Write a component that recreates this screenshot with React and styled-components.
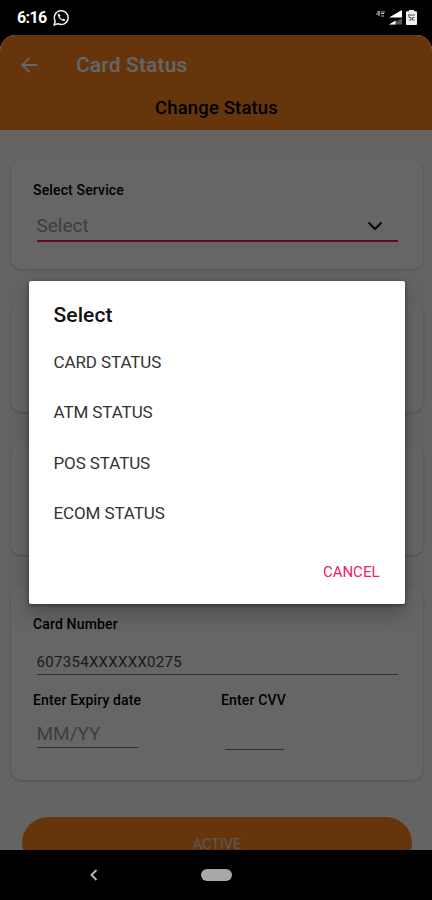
import React from "react";
import styled, { createGlobalStyle } from "styled-components";

const GlobalStyle = createGlobalStyle`
  * { box-sizing: border-box; }
  body {
    margin: 0;
    background: #000;
    font-family: Roboto, "Liberation Sans", sans-serif;
  }
`;

const Phone = styled.div`
  width: 432px;
  height: 900px;
  display: flex;
  flex-direction: column;
  overflow: hidden;
  background: #000;
`;

const StatusBar = styled.div`
  height: 35px;
  flex: none;
  display: flex;
  justify-content: space-between;
  align-items: center;
  padding: 0 15px 0 17px;
`;

const StatusGroup = styled.div`
  display: flex;
  align-items: center;
  gap: ${p => p.gap}px;
`;

const Clock = styled.span`
  color: #fff;
  font-size: 16px;
  font-weight: 700;
  line-height: 20px;
  letter-spacing: -0.6px;
  padding-top: 1px;
`;

const Screen = styled.div`
  position: relative;
  height: 815px;
  flex: none;
  overflow: hidden;
  border-radius: 16px 16px 0 0;
  background: #fafafa;
`;

const Header = styled.header`
  height: 95px;
  background: #ff851e;
`;

const Toolbar = styled.div`
  height: 58px;
  display: flex;
  align-items: center;
  gap: 37px;
  padding: 2px 0 0 20px;
`;

const Title = styled.h1`
  margin: 0;
  color: #fff;
  font-size: 21px;
  font-weight: 500;
  letter-spacing: 0.15px;
  line-height: 24px;
`;

const Subtitle = styled.h2`
  margin: 4px 0 0 1px;
  color: #000;
  font-size: 18.5px;
  font-weight: 500;
  line-height: 22px;
  letter-spacing: 0.15px;
  text-align: center;
`;

const Content = styled.main`
  display: flex;
  flex-direction: column;
  gap: 33px;
  padding: 30px 9px 0 11px;
`;

const Card = styled.section`
  height: ${p => p.height}px;
  flex: none;
  padding: ${p => p.top || 20}px 25px 0 22px;
  border-radius: 10px;
  background: #fff;
  box-shadow: 0 1px 3px rgba(0, 0, 0, 0.22);
`;

const Label = styled.div`
  color: #000;
  font-size: 14px;
  font-weight: 500;
  line-height: 20px;
  letter-spacing: 0.15px;
`;

const Field = styled.div`
  display: flex;
  align-items: center;
  justify-content: space-between;
  width: ${p => p.width}px;
  height: ${p => p.height}px;
  margin: ${p => p.top}px 0 0 3.5px;
  padding: 2px 15px 0 0;
  border-bottom: ${p => (p.active ? "2px solid #ff1468" : "1px solid #777")};
  color: ${p => (p.filled ? "#444" : "#9c9c9c")};
  font-size: ${p => (p.filled ? 15 : 19)}px;
  letter-spacing: ${p => (p.filled ? 0.3 : 0)}px;
`;

const Columns = styled.div`
  display: grid;
  grid-template-columns: 188px 1fr;
  margin-top: 15px;
`;

const ActiveButton = styled.button`
  height: 52px;
  flex: none;
  margin: 4px 11px 0;
  padding: 3px 0 0;
  border: 0;
  border-radius: 26px;
  background: #ff851e;
  color: #ddd;
  font-family: inherit;
  font-size: 14.5px;
  line-height: 12px;
`;

const Scrim = styled.div`
  position: absolute;
  inset: 0;
  display: flex;
  justify-content: center;
  align-items: flex-start;
  padding: 245.5px 0 0 1px;
  background: rgba(0, 0, 0, 0.6);
`;

const Dialog = styled.div`
  width: 376px;
  height: 323px;
  display: flex;
  flex-direction: column;
  padding: 21px 25px 21px;
  border-radius: 2px;
  background: #fff;
  box-shadow: 0 10px 20px rgba(0, 0, 0, 0.25), 0 1px 4px rgba(0, 0, 0, 0.4);
`;

const DialogTitle = styled.h3`
  margin: 0;
  color: #111;
  font-size: 21px;
  font-weight: 500;
  line-height: 26px;
  letter-spacing: 0.1px;
`;

const Option = styled.div`
  height: 50.4px;
  color: #333;
  font-size: 17px;
  line-height: 50.4px;
  letter-spacing: -0.1px;
`;

const OptionList = styled.div`
  margin-top: 9.4px;
`;

const Cancel = styled.button`
  align-self: flex-end;
  margin-top: auto;
  padding: 0;
  border: 0;
  background: none;
  color: #f02069;
  font-family: inherit;
  font-size: 15px;
  line-height: 22px;
`;

const NavBar = styled.nav`
  height: 50px;
  flex: none;
  display: flex;
  align-items: center;
  padding-left: 89px;
  gap: 103px;
`;

const HomePill = styled.div`
  width: 31px;
  height: 12px;
  border-radius: 6px;
  background: #a8a8a8;
`;

const WhatsappIcon = () => (
  <svg width="17" height="17" viewBox="0 0 17 17" fill="none">
    <path d="M1.2 15.8l1-3.8a6.9 6.9 0 1 1 2.7 2.7z" stroke="#eee" strokeWidth="1.5" />
    <path d="M5.7 4.4c-1 .5-1.2 1.6-.7 2.7 1 2.4 2.6 4 4.9 4.8 1.2.4 2.2-.1 2.5-1.2l-2-1.2-1 .9C8 9.6 7.2 8.7 6.7 7.5l.8-1z" fill="#eee" />
  </svg>
);

const SignalIcon = () => (
  <svg width="13" height="15" viewBox="0 0 13 15">
    <path d="M0 7.5L13 0v7.5z" fill="#fff" />
    <path d="M0 14.5L13 8.5v6z" fill="#555" />
    <path d="M0 14.500L6.500 10.500v4z" fill="#fff" />
  </svg>
);

const NetworkIcon = () => (
  <svg width="9" height="15" viewBox="0 0 9 15" fill="none" stroke="#bbb">
    <path d="M3 1v5M0 4h4M1 2h3M5 2h4M5 3.500h3M5 6h3" />
  </svg>
);

const BatteryIcon = () => (
  <svg width="11" height="15" viewBox="0 0 11 15">
    <path d="M3 0h5v1.300h2q1 0 1 1V14q0 1-1 1H1q-1 0-1-1V2.300q0-1 1-1h2z" fill="#eee" />
    <path d="M2 5h7M3 5v2.500h2V10H3M8.500 7.500H6.500V10h2" stroke="#555" fill="none" />
  </svg>
);

const BackIcon = () => (
  <svg width="19" height="18" viewBox="0 0 19 18" fill="none" stroke="#fff" strokeWidth="1.9">
    <path d="M9.500 1.800L2.300 9l7.200 7.200M2.300 9h15.200" />
  </svg>
);

const ChevronDown = () => (
  <svg width="16" height="10" viewBox="0 0 16 10" fill="none" stroke="#111" strokeWidth="2">
    <path d="M1.500 1.500L8 8l6.500-6.500" />
  </svg>
);

const NavBack = () => (
  <svg width="9" height="12" viewBox="0 0 9 12" fill="none" stroke="#b5b5b5" strokeWidth="2">
    <path d="M7.500 1L2.500 6l5 5" />
  </svg>
);

const options = ["CARD STATUS", "ATM STATUS", "POS STATUS", "ECOM STATUS"];

const App = () => {
    return (
        <Phone>
            <GlobalStyle />
            <StatusBar>
                <StatusGroup gap={6}>
                    <Clock>6:16</Clock>
                    <WhatsappIcon />
                </StatusGroup>
                <StatusGroup gap={4}>
                    <NetworkIcon />
                    <SignalIcon />
                    <BatteryIcon />
                </StatusGroup>
            </StatusBar>

            <Screen>
                <Header>
                    <Toolbar>
                        <BackIcon />
                        <Title>Card Status</Title>
                    </Toolbar>
                    <Subtitle>Change Status</Subtitle>
                </Header>
                <Content>
                    <Card height={109}>
                        <Label>Select Service</Label>
                        <Field active width={361} height={32} top={9.5}>
                            <span>Select</span>
                            <ChevronDown />
                        </Field>
                    </Card>
                    <Card height={110} />
                    <Card height={110} />
                    <Card height={192} top={26}>
                        <Label>Card Number</Label>
                        <Field filled width={361} height={28} top={13}>
                            <span>607354XXXXXX0275</span>
                        </Field>
                        <Columns>
                            <div>
                                <Label>Enter Expiry date</Label>
                                <Field width={101} height={31} top={7}>
                                    <span>MM/YY</span>
                                </Field>
                            </div>
                            <div>
                                <Label>Enter CVV</Label>
                                <Field width={59} height={33} top={7} />
                            </div>
                        </Columns>
                    </Card>
                    <ActiveButton>ACTIVE</ActiveButton>
                </Content>

                <Scrim>
                    <Dialog>
                        <DialogTitle>Select</DialogTitle>
                        <OptionList>
                            {options.map(option => (
                                <Option key={option}>{option}</Option>
                            ))}
                        </OptionList>
                        <Cancel>CANCEL</Cancel>
                    </Dialog>
                </Scrim>
            </Screen>

            <NavBar>
                <NavBack />
                <HomePill />
            </NavBar>
        </Phone>
    );
};

export default App;
